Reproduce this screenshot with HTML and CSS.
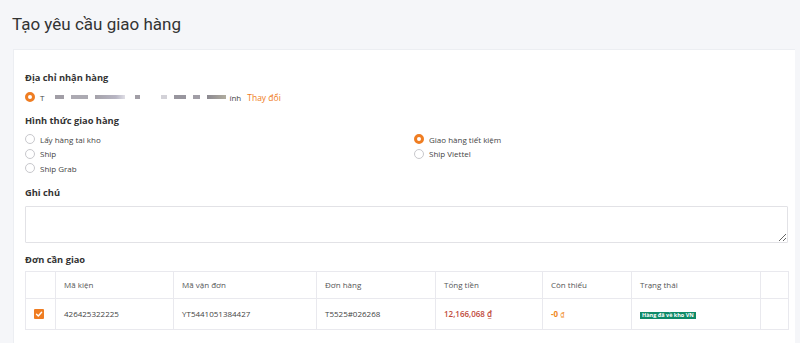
FILE: index.html
```html
<!DOCTYPE html>
<html lang="vi">
<head>
<meta charset="utf-8">
<title>Tạo yêu cầu giao hàng</title>
<link rel="stylesheet" href="styles.css">
</head>
<body>
<h1 class="page-title">Tạo yêu cầu giao hàng</h1>
<div class="card">
  <div class="section-label">Địa chỉ nhận hàng</div>
  <div class="address-row">
    <span class="radio checked"></span>
    <span class="addr-text">T</span>
    <span class="blur b1"></span>
    <span class="blur b2"></span>
    <span class="blur b3"></span>
    <span class="blur b4"></span>
    <span class="blur b5"></span>
    <span class="blur b6"></span>
    <span class="blur b7"></span>
    <span class="blur b8"></span>
    <span class="addr-text">ính</span>
    <a class="change-link">Thay đổi</a>
  </div>

  <div class="section-label mt">Hình thức giao hàng</div>
  <div class="options">
    <div class="option-col">
      <label class="option"><span class="radio"></span>Lấy hàng tai kho</label>
      <label class="option"><span class="radio"></span>Ship</label>
      <label class="option"><span class="radio"></span>Ship Grab</label>
    </div>
    <div class="option-col">
      <label class="option"><span class="radio checked"></span>Giao hàng tiết kiệm</label>
      <label class="option"><span class="radio"></span>Ship Viettel</label>
    </div>
  </div>

  <div class="section-label mt">Ghi chú</div>
  <textarea class="note"></textarea>

  <div class="section-label mt">Đơn cần giao</div>
  <table class="orders">
    <colgroup>
      <col class="c-check"><col class="c-kien"><col class="c-van"><col class="c-don"><col class="c-tong"><col class="c-thieu"><col class="c-trang"><col class="c-end">
    </colgroup>
    <thead>
      <tr>
        <th></th>
        <th>Mã kiện</th>
        <th>Mã vận đơn</th>
        <th>Đơn hàng</th>
        <th>Tổng tiền</th>
        <th>Còn thiếu</th>
        <th>Trạng thái</th>
        <th></th>
      </tr>
    </thead>
    <tbody>
      <tr>
        <td class="check-cell"><span class="checkbox"><svg viewBox="0 0 10 10" width="10" height="10"><path d="M2.5 5.2 L4.3 7 L7.6 3.2" fill="none" stroke="#fff" stroke-width="1.4" stroke-linecap="round" stroke-linejoin="round"/></svg></span></td>
        <td>426425322225</td>
        <td>YT5441051384427</td>
        <td>T5525#026268</td>
        <td class="total">12,166,068 ₫</td>
        <td class="missing">-0 <span class="cur">₫</span></td>
        <td><span class="badge">Hàng đã về kho VN</span></td>
        <td></td>
      </tr>
    </tbody>
  </table>
</div>
</body>
</html>
```

FILE: styles.css
```css
* { box-sizing: border-box; }
html, body { margin: 0; padding: 0; }
body {
  background: #f5f6f9;
  font-family: "Open Sans", "Liberation Sans", sans-serif;
  color: #333;
  width: 800px;
  height: 343px;
  overflow: hidden;
}
.page-title {
  margin: 0;
  height: 49px;
  padding: 12px 12px 0;
  font-family: Roboto, "Open Sans", sans-serif;
  font-weight: 400;
  font-size: 17px;
  line-height: 24px;
  color: #333;
}
.card {
  margin: 0 5px 0 13px;
  background: #fff;
  border-top: 1px solid #eceef2;
  border-left: 1px solid #eceef2;
  padding: 21px 7px 20px 11px;
  min-height: 300px;
}
.section-label {
  font-size: 9.3px;
  font-weight: 700;
  line-height: 14px;
  color: #333;
}
.section-label.mt { margin-top: 10px; }

.address-row {
  display: flex;
  align-items: center;
  height: 14px;
  margin-top: 5px;
  font-size: 8px;
  color: #444;
}
.radio {
  display: inline-block;
  width: 10px;
  height: 10px;
  border-radius: 50%;
  border: 1px solid #c8c8cc;
  background: #fff;
  margin-right: 5px;
  flex: none;
}
.radio.checked {
  border: 3px solid #ef7d22;
  background: #fff;
}
.addr-text { margin-right: 6px; }
.blur {
  display: inline-block;
  height: 4px;
  background: #8a8790;
  filter: blur(0.6px);
  margin-right: 7px;
  opacity: 0.8;
}
.b1 { width: 9px; margin-left: 5px; }
.b2 { width: 17px; background: #9896a0; }
.b3 { width: 30px; background: linear-gradient(90deg, #8f8c96, #a7a4b5 70%, #d8d7e0); }
.b4 { width: 5px; margin-left: 3px; }
.b5 { width: 6px; margin-left: 14px; background: #c9c8cf; }
.b6 { width: 12px; background: #7f7c86; }
.b7 { width: 7px; }
.b8 { width: 19px; background: linear-gradient(90deg, #6f6c76, #9d9887); margin-right: 3px; }
.change-link {
  color: #ef7d22;
  font-size: 8.5px;
  margin-left: 0;
}

.options {
  display: grid;
  grid-template-columns: 389px 1fr;
  margin-top: 4px;
}
.option-col { display: flex; flex-direction: column; }
.option {
  display: flex;
  align-items: center;
  height: 14.5px;
  font-size: 8px;
  color: #444;
}

.note {
  display: block;
  width: 763px;
  height: 37px;
  margin: 6px 0 0;
  border: 1px solid #e2e2e6;
  border-radius: 1px;
  background: #fff;
  resize: vertical;
  font-family: inherit;
}

.orders {
  margin-top: 4px;
  width: 763px;
  border-collapse: collapse;
  table-layout: fixed;
  font-size: 8px;
  color: #444;
}
.c-check { width: 30px; }
.c-kien { width: 118px; }
.c-van { width: 143px; }
.c-don { width: 119px; }
.c-tong { width: 107px; }
.c-thieu { width: 89px; }
.c-trang { width: 129px; }
.c-end { width: 28px; }
.orders th, .orders td {
  border: 1px solid #e9e9ee;
  text-align: left;
  padding: 0 0 0 8px;
  white-space: nowrap;
}
.orders th {
  height: 27px;
  font-weight: 400;
  color: #555;
}
.orders td { height: 31px; }
.orders td.check-cell { padding-left: 8px; }
.checkbox {
  display: flex;
  align-items: center;
  justify-content: center;
  width: 10px;
  height: 10px;
  background: #ef7d22;
  border-radius: 1px;
}
.total { color: #c0493a; font-weight: 600; }
.missing { color: #ef8a1f; font-weight: 700; }
.missing .cur { font-weight: 400; font-size: 7px; }
.badge {
  display: inline-block;
  background: #0f8a68;
  color: #fff;
  font-size: 5.5px;
  font-weight: 700;
  line-height: 7px;
  padding: 0 2px;
}
```
